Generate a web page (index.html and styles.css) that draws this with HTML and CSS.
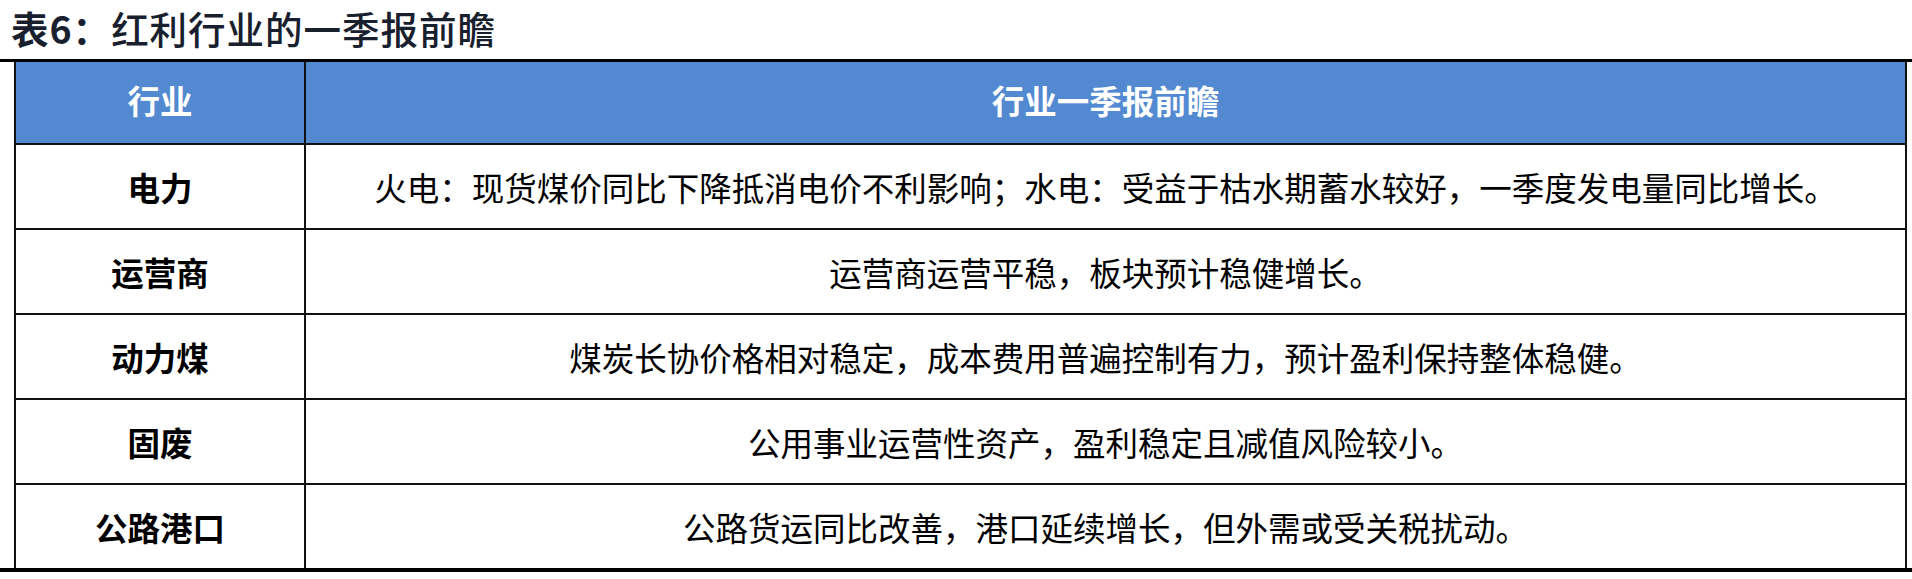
FILE: index.html
```html
<!DOCTYPE html>
<html lang="zh-CN">
<head>
<meta charset="utf-8">
<title>表6：红利行业的一季报前瞻</title>
<link rel="stylesheet" href="styles.css">
</head>
<body>
<h1 class="title"><span class="tno">表6：</span>红利行业的一季报前瞻</h1>
<div class="sheet">
  <table class="grid">
    <colgroup>
      <col class="c1">
      <col class="c2">
    </colgroup>
    <thead>
      <tr>
        <th>行业</th>
        <th>行业一季报前瞻</th>
      </tr>
    </thead>
    <tbody>
      <tr>
        <td class="ind">电力</td>
        <td>火电：现货煤价同比下降抵消电价不利影响；水电：受益于枯水期蓄水较好，一季度发电量同比增长。</td>
      </tr>
      <tr>
        <td class="ind">运营商</td>
        <td>运营商运营平稳，板块预计稳健增长。</td>
      </tr>
      <tr>
        <td class="ind">动力煤</td>
        <td>煤炭长协价格相对稳定，成本费用普遍控制有力，预计盈利保持整体稳健。</td>
      </tr>
      <tr>
        <td class="ind">固废</td>
        <td>公用事业运营性资产，盈利稳定且减值风险较小。</td>
      </tr>
      <tr>
        <td class="ind">公路港口</td>
        <td>公路货运同比改善，港口延续增长，但外需或受关税扰动。</td>
      </tr>
    </tbody>
  </table>
</div>
</body>
</html>
```

FILE: styles.css
```css
html, body {
  margin: 0;
  padding: 0;
  background: #ffffff;
}

body {
  width: 1912px;
  font-family: "Noto Sans CJK SC", "Noto Sans", sans-serif;
}

.title {
  margin: 0;
  height: 59px;
  box-sizing: border-box;
  padding: 1px 0 0 11px;
  font-size: 37.5px;
  line-height: 54px;
  font-weight: 500;
  color: #18202e;
  letter-spacing: 1px;
}

.tno {
  font-weight: 700;
}

.sheet {
  border-top: 3px solid #000000;
  border-bottom: 4px solid #000000;
  padding: 0 5px 0 14px;
}

.grid {
  width: 100%;
  border-collapse: collapse;
  table-layout: fixed;
}

.c1 {
  width: 290px;
}

.grid th,
.grid td {
  border: 2px solid #111111;
  text-align: center;
  vertical-align: middle;
  padding: 0;
  font-size: 32.5px;
  color: #000000;
}

.grid tr:first-child th {
  border-top: 0;
}

.grid tbody tr:last-child td {
  border-bottom: 0;
}

.grid th {
  height: 82px;
  padding-bottom: 6px;
  box-sizing: border-box;
  background: #5389d0;
  color: #ffffff;
  font-weight: 700;
}

.grid td {
  height: 83px;
  font-weight: 400;
}

.grid td.ind {
  font-weight: 700;
}
```
